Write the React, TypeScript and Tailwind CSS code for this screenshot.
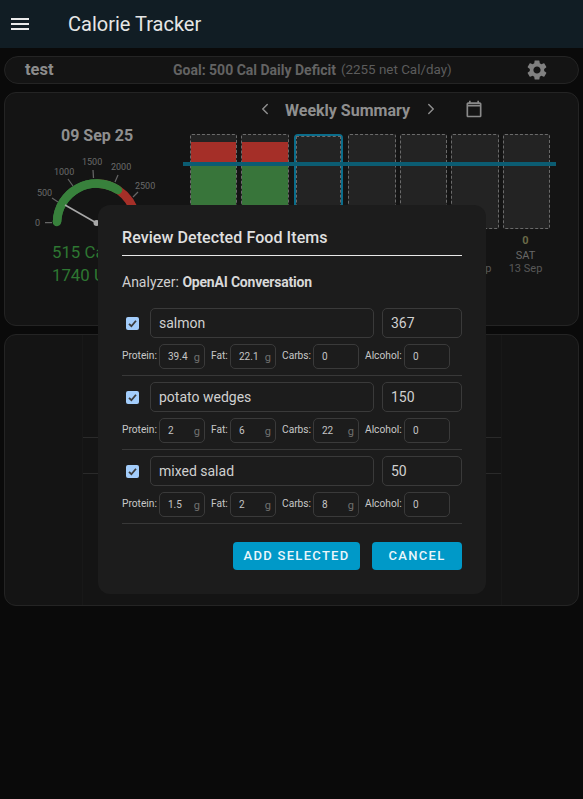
import { ChevronLeft, ChevronRight } from "lucide-react";

function Macro({ label, value, unit = true, lw, ml = "" }: { label: string; value: string; unit?: boolean; lw: string; ml?: string }) {
  return (
    <div className={`flex items-center ${ml}`}>
      <span className={`${lw} text-[10.2px] leading-none text-[#c8c8c8] whitespace-nowrap`}>{label}</span>
      <div className="relative h-[25px] w-[46px] rounded-[5px] border border-[#3a3a3a] flex items-center pl-[8px] text-[10px] text-[#c4c4c4]">
        {value}
        {unit && <span className="absolute right-[4px] top-[5px] text-[11px] text-[#707070]">g</span>}
      </div>
    </div>
  );
}

function Item({ name, cal, p, f, c }: { name: string; cal: string; p: string; f: string; c: string }) {
  return (
    <div className="border-b border-[#383838] pb-[6px] mb-[6px]">
      <div className="flex items-center">
        <div className="w-[28px] flex justify-center pr-[7px]">
          <div className="w-[13px] h-[13px] rounded-[2px] bg-[#a3cdfb] flex items-center justify-center">
            <svg viewBox="0 0 12 12" className="w-[11px] h-[11px]"><path d="M2.2 6.3 L4.8 9 L9.8 3" fill="none" stroke="#3c3c3c" strokeWidth="2" /></svg>
          </div>
        </div>
        <div className="w-[224px] h-[30px] rounded-[5px] border border-[#3a3a3a] flex items-center pl-[8px] text-sm text-[#d0d0d0]">{name}</div>
        <div className="ml-[8px] w-[80px] h-[30px] rounded-[5px] border border-[#3a3a3a] flex items-center pl-[8px] text-sm text-[#d0d0d0]">{cal}</div>
      </div>
      <div className="flex items-center mt-[6px]">
        <Macro label="Protein:" value={p} lw="w-[37px]" />
        <Macro label="Fat:" value={f} lw="w-[19px]" ml="ml-[6px]" />
        <Macro label="Carbs:" value={c} unit={c !== "0"} lw="w-[31px]" ml="ml-[6px]" />
        <Macro label="Alcohol:" value="0" unit={false} lw="w-[39px]" ml="ml-[6px]" />
      </div>
    </div>
  );
}

function Bar({ w, ml, filled, selected }: { w: string; ml: string; filled?: boolean; selected?: boolean }) {
  if (selected) {
    return (
      <div className={`${w} ${ml} h-[95px] shrink-0 rounded-[4px] border-2 border-[#0b6d8b]`}>
        <div className="h-full bg-[#232323] border border-dashed border-[#6a6a6a]" />
      </div>
    );
  }
  return (
    <div className={`${w} ${ml} h-[95px] shrink-0 flex flex-col rounded-[2px] bg-[#232323] border border-dashed border-[#6a6a6a]`}>
      {filled && <div className="mt-[7px] h-[22px] bg-[#a52f28]" />}
      {filled && <div className="flex-1 bg-[#38753a]" />}
    </div>
  );
}

const days = [
  ["SUN", "7 Sep"],
  ["MON", "8 Sep"],
  ["TUE", "9 Sep"],
  ["WED", "10 Sep"],
  ["THU", "11 Sep"],
  ["FRI", "12 Sep"],
  ["SAT", "13 Sep"],
];

export default function App() {
  return (
    <div className="relative w-[583px] h-[799px] overflow-hidden bg-[#0a0a0a] text-[#e0e0e0] font-['Roboto',sans-serif]">
      <header className="h-12 bg-[#111d24] flex items-center">
        <svg viewBox="0 0 24 24" className="w-6 h-6 ml-[8px] fill-[#eaeaea]"><path d="M3 18h18v-2H3v2zm0-5h18v-2H3v2zm0-7v2h18V6H3z" /></svg>
        <h1 className="ml-[36px] text-xl font-normal text-[#e6e6e6]">Calorie Tracker</h1>
      </header>

      <main className="px-[4px]">
        <section className="mt-[8px] h-[28px] rounded-[14px] border border-[#242424] bg-[#141414] flex items-center">
          <span className="ml-[20px] w-[148px] text-[16.5px] font-bold text-[#8c8c8c]">test</span>
          <span className="text-sm font-bold text-[#636363]">Goal: 500 Cal Daily Deficit</span>
          <span className="ml-[5px] text-[13.4px] text-[#5c5c5c]">(2255 net Cal/day)</span>
          <svg viewBox="0 0 24 24" className="w-6 h-6 ml-auto mr-[29px] fill-[#808080]"><path d="M19.14 12.94c.04-.3.06-.61.06-.94 0-.32-.02-.64-.07-.94l2.03-1.58a.49.49 0 0 0 .12-.61l-1.92-3.32a.488.488 0 0 0-.59-.22l-2.39.96c-.5-.38-1.03-.7-1.62-.94l-.36-2.54a.484.484 0 0 0-.48-.41h-3.84c-.24 0-.43.17-.47.41l-.36 2.54c-.59.24-1.13.57-1.62.94l-2.39-.96c-.22-.08-.47 0-.59.22L2.74 8.87c-.12.21-.08.47.12.61l2.03 1.58c-.05.3-.09.63-.09.94s.02.64.07.94l-2.03 1.58a.49.49 0 0 0-.12.61l1.92 3.32c.12.22.37.29.59.22l2.39-.96c.5.38 1.03.7 1.62.94l.36 2.54c.05.24.24.41.48.41h3.84c.24 0 .44-.17.47-.41l.36-2.54c.59-.24 1.13-.56 1.62-.94l2.39.96c.22.08.47 0 .59-.22l1.92-3.32c.12-.22.07-.47-.12-.61l-2.01-1.58zM12 15.6c-1.98 0-3.6-1.62-3.6-3.6s1.62-3.6 3.6-3.6 3.6 1.62 3.6 3.6-1.62 3.6-3.6 3.6z" /></svg>
        </section>

        <section className="mt-[8px] h-[234px] rounded-[12px] border border-[#242424] bg-[#141414] flex overflow-hidden">
          <div className="w-[178px] shrink-0 flex flex-col items-start">
            <div className="mt-[31px] ml-[56px] text-base leading-6 font-bold text-[#8f8f8f]">09 Sep 25</div>
            <svg viewBox="30 155 130 75" className="w-[130px] h-[75px] mt-[7px] ml-[25px]">
              <g stroke="#666" strokeWidth="1.2">
                <path d="M45 222.7 H52" /><path d="M52 198 L58 202" /><path d="M68 179 L73 186" /><path d="M93 170 L93.5 178" /><path d="M118 175 L115 182" /><path d="M138 192 L133 197" />
              </g>
              <g fill="#6a6a6a" fontSize="9" fontFamily="Roboto, sans-serif">
                <text x="35" y="226">0</text>
                <text x="37" y="196">500</text>
                <text x="54" y="175">1000</text>
                <text x="82" y="165">1500</text>
                <text x="111" y="170">2000</text>
                <text x="135" y="189">2500</text>
              </g>
              <path d="M96.5 183.5 A 39.5 39.5 0 0 1 136 223" fill="none" stroke="#a52f28" strokeWidth="8.5" />
              <path d="M57 222 A 39.5 39.5 0 0 1 118 190" fill="none" stroke="#38813c" strokeWidth="8.5" strokeLinecap="round" />
              <path d="M57 222 A 39.5 39.5 0 0 1 117.5 189.5" fill="none" stroke="#38813c" strokeWidth="8.5" />
              <path d="M65 205 L96.5 223" stroke="#a8a8a8" strokeWidth="1.5" />
              <circle cx="96.5" cy="223" r="3" fill="#a8a8a8" />
            </svg>
            <div className="mt-[11px] ml-[47px] text-[16.8px] leading-[23px] text-[#2e7732] whitespace-nowrap">515 Cal</div>
            <div className="ml-[47px] text-[16.8px] leading-[23px] text-[#2e7732] whitespace-nowrap">1740 Under</div>
          </div>
          <div className="flex-1 min-w-0 relative">
            <div className="flex items-center h-[35px]">
              <ChevronLeft className="w-[18px] h-[18px] ml-[73px] -mt-[3px] text-[#8c8c8c]" strokeWidth={2} />
              <span className="ml-[11px] text-base font-bold text-[#8f8f8f]">Weekly Summary</span>
              <ChevronRight className="w-[18px] h-[18px] ml-[12px] -mt-[3px] text-[#8c8c8c]" strokeWidth={2} />
              <svg viewBox="0 0 24 24" className="w-[20px] h-[20px] ml-[24px] -mt-[3px] fill-[#8a8a8a]"><path d="M19 4h-1V2h-2v2H8V2H6v2H5c-1.1 0-2 .9-2 2v14c0 1.1.9 2 2 2h14c1.1 0 2-.9 2-2V6c0-1.1-.9-2-2-2zm0 16H5V9h14v11zm0-13H5V6h14v1z" /></svg>
            </div>
            <div className="flex mt-[6px] ml-[7px]">
              <Bar w="w-[47px]" ml="" filled />
              <Bar w="w-[48px]" ml="ml-[4px]" filled />
              <Bar w="w-[49px]" ml="ml-[5px]" selected />
              <Bar w="w-[48px]" ml="ml-[5px]" />
              <Bar w="w-[47px]" ml="ml-[4px]" />
              <Bar w="w-[48px]" ml="ml-[4px]" />
              <Bar w="w-[47px]" ml="ml-[4px]" />
            </div>
            <div className="flex mt-[5px] ml-[7px]">
              {days.map((d, i) => (
                <div key={d[0]} className={`w-[47px] shrink-0 text-center text-[11px] leading-[13px] ${i === 0 ? "" : i === 5 ? "ml-[6px]" : i === 6 ? "ml-[4px]" : "ml-[5px]"}`}>
                  <div className="font-bold text-[#6a6a48]">0</div>
                  <div className="text-[#686868] mt-[2px]">{d[0]}</div>
                  <div className="text-[#585858] whitespace-nowrap">{d[1]}</div>
                </div>
              ))}
            </div>
            <div className="absolute left-0 right-[22px] top-[69px] h-[4px] bg-[#0b5c72]" />
          </div>
        </section>

        <section className="mt-[8px] h-[272px] rounded-[12px] border border-[#242424] bg-[#141414]">
          <div className="h-full ml-[77px] mr-[76px] border-x border-[#181818] pt-[102px]">
            <div className="h-[37px] border-y border-[#2a2a2a]" />
          </div>
        </section>
      </main>

      <div className="absolute left-[98px] top-[205px] w-[388px] h-[389px] rounded-[12px] bg-[#1c1c1c] px-[24px] pt-[23px]">
        <h2 className="text-base font-medium leading-[19px] tracking-[0.08px] text-[#e0e0e0] pb-[8px] border-b border-[#e8e8e8]">Review Detected Food Items</h2>
        <p className="mt-[18px] text-sm leading-[16px] text-[#d0d0d0]">Analyzer: <b className="font-bold tracking-[-0.2px] text-[#d8d8d8]">OpenAI Conversation</b></p>
        <div className="mt-[18px]">
          <Item name="salmon" cal="367" p="39.4" f="22.1" c="0" />
          <Item name="potato wedges" cal="150" p="2" f="6" c="22" />
          <Item name="mixed salad" cal="50" p="1.5" f="2" c="8" />
        </div>
        <div className="flex justify-end mt-[18px] gap-[12px]">
          <button className="w-[127px] h-[28px] rounded-[4px] bg-[#0099c8] text-[13px] font-medium tracking-[1.3px] text-[#eaf6fb]">ADD SELECTED</button>
          <button className="w-[90px] h-[28px] rounded-[4px] bg-[#0099c8] text-[13px] font-medium tracking-[1.3px] text-[#eaf6fb]">CANCEL</button>
        </div>
      </div>
    </div>
  );
}
